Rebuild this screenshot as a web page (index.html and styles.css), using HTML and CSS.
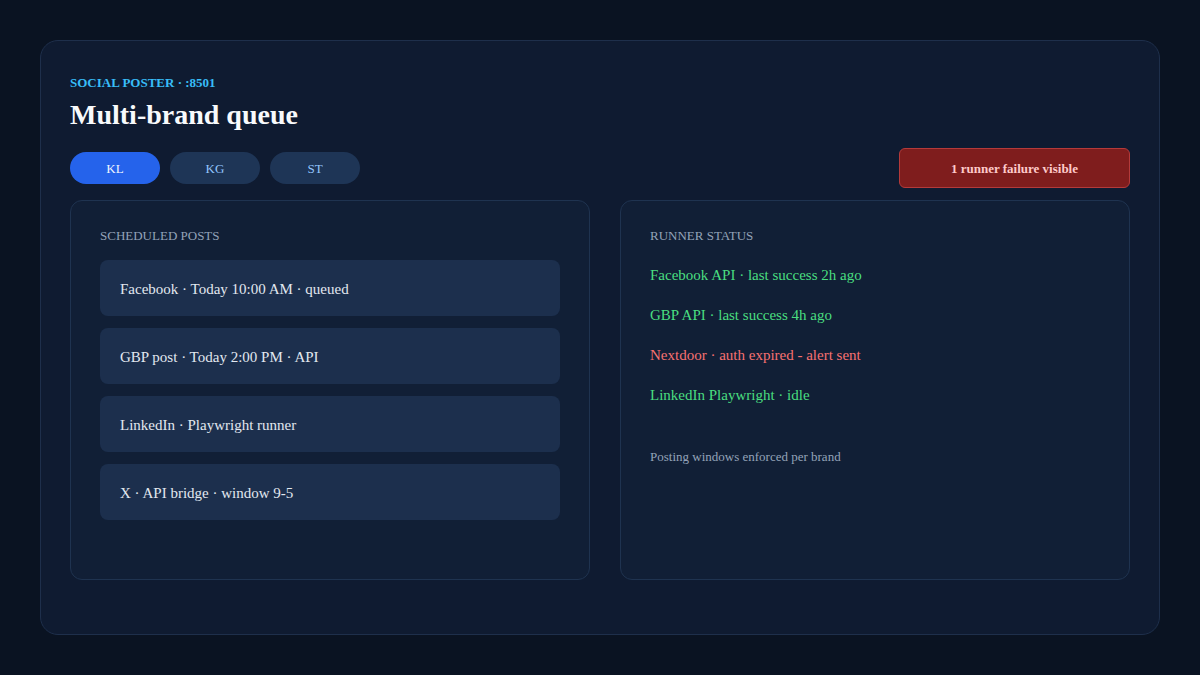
FILE: index.html
```html
<!DOCTYPE html>
<html>
<head>
    <link rel="stylesheet" href="styles.css">
</head>
<body>
    <div class="shell">
        <div class="eyebrow">SOCIAL POSTER · :8501</div>
        <h1 class="title">Multi-brand queue</h1>

        <div class="toolbar">
            <div class="tabs">
                <button class="tab active">KL</button>
                <button class="tab">KG</button>
                <button class="tab">ST</button>
            </div>
            <div class="alert">1 runner failure visible</div>
        </div>

        <div class="panels">
            <div class="panel">
                <div class="panel-title">SCHEDULED POSTS</div>
                <div class="post">Facebook · Today 10:00 AM · queued</div>
                <div class="post">GBP post · Today 2:00 PM · API</div>
                <div class="post">LinkedIn · Playwright runner</div>
                <div class="post">X · API bridge · window 9-5</div>
            </div>

            <div class="panel">
                <div class="panel-title">RUNNER STATUS</div>
                <div class="runner ok">Facebook API · last success 2h ago</div>
                <div class="runner ok">GBP API · last success 4h ago</div>
                <div class="runner bad">Nextdoor · auth expired - alert sent</div>
                <div class="runner ok">LinkedIn Playwright · idle</div>
                <div class="note">Posting windows enforced per brand</div>
            </div>
        </div>
    </div>
</body>
</html>
```

FILE: styles.css
```css
body {
    margin: 0;
    padding: 40px;
    min-height: 100vh;
    box-sizing: border-box;
    background-color: #0a1322;
    font-family: "Liberation Serif", "Times New Roman", serif;
    color: #e2e8f0;
}

.shell {
    height: 595px;
    box-sizing: border-box;
    padding: 29px;
    background-color: #0f1b31;
    border: 1px solid #1e2f4b;
    border-radius: 18px;
}

.eyebrow {
    margin-top: 5px;
    font-size: 13px;
    line-height: 16px;
    font-weight: bold;
    color: #38bdf8;
}

.title {
    margin: 8px 0 0;
    font-size: 28px;
    line-height: 32px;
    font-weight: bold;
    color: #f8fafc;
}

.toolbar {
    display: flex;
    justify-content: space-between;
    align-items: center;
    margin-top: 17px;
    height: 40px;
}

.tabs {
    display: flex;
    gap: 10px;
}

.tab {
    width: 90px;
    height: 32px;
    padding-top: 2px;
    border: none;
    border-radius: 16px;
    background-color: #1e3556;
    color: #93c5fd;
    font-family: inherit;
    font-size: 13px;
    cursor: pointer;
}

.tab.active {
    background-color: #2563eb;
    color: #eff6ff;
}

.alert {
    width: 231px;
    height: 40px;
    box-sizing: border-box;
    padding-top: 1px;
    line-height: 38px;
    text-align: center;
    background-color: #7f1d1d;
    border: 1px solid #b43a3a;
    border-radius: 6px;
    color: #fecaca;
    font-size: 13px;
    font-weight: bold;
}

.panels {
    display: grid;
    grid-template-columns: 520px 1fr;
    gap: 30px;
    margin-top: 12px;
}

.panel {
    height: 380px;
    box-sizing: border-box;
    padding: 27px 29px;
    background-color: #111f36;
    border: 1px solid #1f3350;
    border-radius: 12px;
}

.panel-title {
    font-size: 13px;
    line-height: 16px;
    color: #94a3b8;
    margin-bottom: 16px;
}

.post {
    height: 56px;
    box-sizing: border-box;
    display: flex;
    align-items: center;
    padding: 2px 20px 0;
    margin-bottom: 12px;
    background-color: #1c2f4d;
    border-radius: 8px;
    font-size: 15px;
    color: #e2e8f0;
}

.runner {
    font-size: 15px;
    line-height: 24px;
    margin-bottom: 16px;
}

.panel-title + .runner {
    margin-top: 19px;
}

.ok {
    color: #4ade80;
}

.bad {
    color: #f87171;
}

.note {
    margin-top: 42px;
    font-size: 13px;
    color: #94a3b8;
}
```
